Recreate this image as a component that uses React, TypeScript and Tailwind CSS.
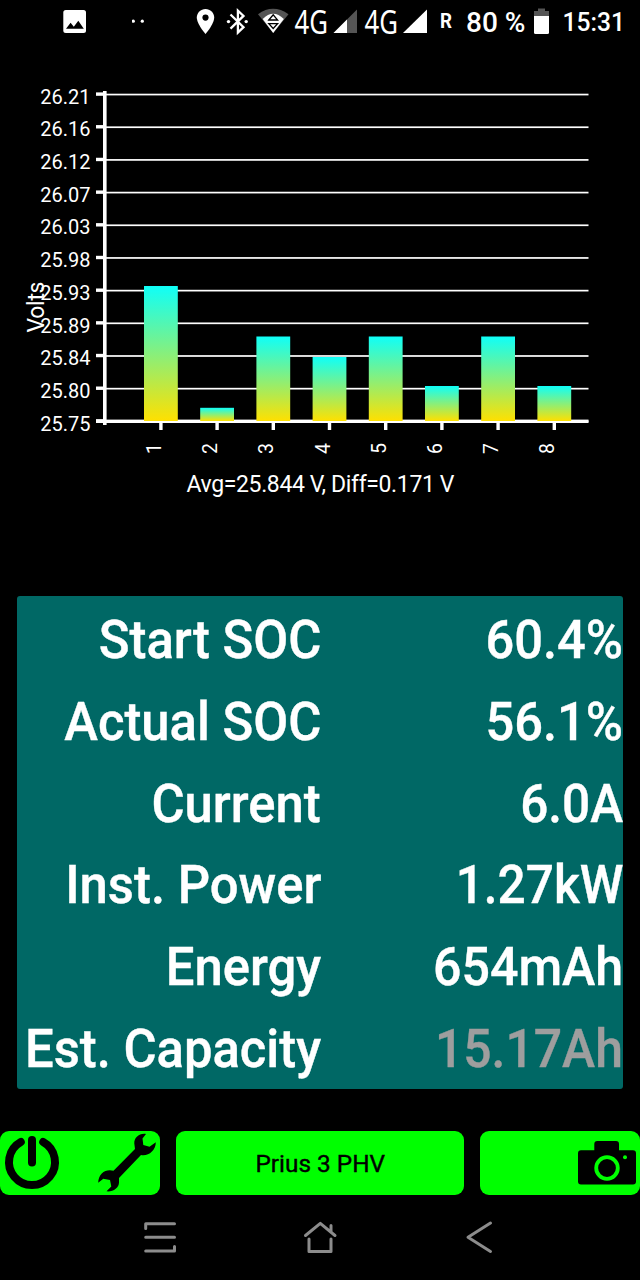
const LABELS = ["26.21", "26.16", "26.12", "26.07", "26.03", "25.98", "25.93", "25.89", "25.84", "25.80", "25.75"];
const TOPS = [286, 407.8, 336.5, 357, 336.5, 386, 336.5, 386];

const ROWS = [
  { label: "Start SOC", value: "60.4%", fit: "scale-x-[0.955]" },
  { label: "Actual SOC", value: "56.1%", fit: "scale-x-[0.955]" },
  { label: "Current", value: "6.0A", fit: "scale-x-[0.935]" },
  { label: "Inst. Power", value: "1.27kW", fit: "scale-x-[0.935]" },
  { label: "Energy", value: "654mAh", fit: "scale-x-[0.945]" },
  { label: "Est. Capacity", value: "15.17Ah", fit: "scale-x-[0.94]", dim: true },
];

function Network() {
  return (
    <svg width="34" height="44" className="shrink-0 overflow-visible" fill="#fff">
      <text x="0.5" y="33.500" fontSize="32" textLength="33.500" lengthAdjust="spacingAndGlyphs" className="font-['Noto_Sans',sans-serif] font-normal">4G</text>
    </svg>
  );
}

function StatusBar() {
  return (
    <header className="flex h-11 items-start pl-[63px] font-medium">
      <svg width="24" height="44" className="mr-[45px] shrink-0">
        <rect x="0.3" y="10" width="22.700" height="23" rx="2.500" fill="#fff" />
        <path d="M3 28.800l4.600-6 3.200 3.900 4.500-5.900 5.500 8z" fill="#000" />
      </svg>
      <svg width="16" height="44" className="mr-[48px] shrink-0" fill="#fff">
        <circle cx="1.300" cy="21.200" r="1.600" />
        <circle cx="10.300" cy="21.200" r="1.600" />
      </svg>
      <svg width="19" height="44" className="mr-[11px] shrink-0">
        <path d="M9.500 9C4.700 9 .8 12.800.8 17.500.8 24 9.500 34 9.500 34s8.700-10 8.700-16.500C18.200 12.800 14.300 9 9.500 9z" fill="#fff" />
        <circle cx="9.500" cy="17.600" r="3.100" fill="#000" />
      </svg>
      <svg width="24" height="44" className="mr-[8px] shrink-0" fill="none" stroke="#fff" strokeWidth="2.300">
        <path d="M4.500 14.500l13 12.700-5.600 5.300V10.700l5.600 5.200-13 12.700" />
        <circle cx="2.500" cy="21.600" r="1.700" fill="#fff" stroke="none" />
        <circle cx="20.200" cy="21.600" r="1.700" fill="#fff" stroke="none" />
      </svg>
      <svg width="32" height="44" className="mr-[4px] shrink-0">
        <path d="M0 14.200Q15 3.500 30.500 14.200L15.200 33z" fill="#555" />
        <path d="M4.700 19Q15.200 8.500 25.800 19L15.200 33z" fill="#fff" />
        <path d="M10.800 20l4.400-5.200 4.400 5.200zM10.800 23.700h8.800l-4.400 4.800z" fill="none" stroke="#000" strokeWidth="1.300" />
      </svg>
      <Network />
      <svg width="26" height="44" className="ml-[5px] mr-[5px] shrink-0">
        <path d="M.5 33L24 9.500V33z" fill="#555" />
        <path d="M.5 33L14 19.500V33z" fill="#fff" />
      </svg>
      <Network />
      <svg width="25" height="44" className="ml-[5px] mr-[12px] shrink-0">
        <path d="M0 33L24 9.500V33z" fill="#fff" />
      </svg>
      <svg width="14" height="44" className="mr-[12px] shrink-0" fill="#fff">
        <text x="0" y="28" fontSize="20" fontWeight="700" textLength="12" lengthAdjust="spacingAndGlyphs">R</text>
      </svg>
      <svg width="62" height="44" className="mr-[6px] shrink-0" fill="#fff">
        <text x="0" y="31.500" fontSize="27" textLength="59.500" lengthAdjust="spacingAndGlyphs">80 %</text>
      </svg>
      <svg width="16" height="44" className="mr-[12px] shrink-0">
        <path d="M4 8.500h7V11h4v5.500H0V11h4z" fill="#555" />
        <path d="M0 16h15v16.500q0 1.500-1.500 1.500h-12Q0 34 0 32.500z" fill="#fff" />
      </svg>
      <svg width="64" height="44" className="shrink-0" fill="#fff">
        <text x="0.500" y="31" fontSize="25.500" textLength="62.500" lengthAdjust="spacingAndGlyphs">15:31</text>
      </svg>
    </header>
  );
}

function Chart() {
  return (
    <svg width="640" height="552" viewBox="0 44 640 552" className="block shrink-0" fill="#fff">
      <defs>
        <linearGradient id="bar" x1="0" y1="0" x2="0" y2="1">
          <stop offset="0" stopColor="#0ffff8" />
          <stop offset="1" stopColor="#ffe000" />
        </linearGradient>
      </defs>
      {LABELS.map((t, i) => (
        <g key={t}>
          <rect x="106" y={93.7 + i * 32.68} width="482.500" height="1.700" />
          <rect x="96" y={92.4 + i * 32.68} width="8" height="3.400" />
          <text x="90.500" y={103.6 + i * 32.7} fontSize="20" textAnchor="end">{t}</text>
        </g>
      ))}
      <rect x="103" y="91" width="3.600" height="334" />
      <rect x="96" y="419.600" width="492.500" height="3.400" />
      {TOPS.map((y, i) => {
        const c = 161 + i * 56.2;
        return (
          <g key={i}>
            <rect x={c - 17} y={y} width="33.800" height={421 - y} fill="url(#bar)" />
            <rect x={c - 1.8} y="422" width="3.400" height="8" />
            <text transform={`translate(${c} 448.600) rotate(-90)`} fontSize="19.500" textAnchor="middle">{i + 1}</text>
          </g>
        );
      })}
      <text transform="translate(43.500 332.500) rotate(-90)" fontSize="23" textLength="51">Volts</text>
      <text x="186.500" y="492.400" fontSize="23" textLength="268">Avg=25.844 V, Diff=0.171 V</text>
    </svg>
  );
}

export default function App() {
  return (
    <main className="flex h-[1280px] w-[640px] flex-col overflow-hidden bg-black font-[Roboto,sans-serif] text-white">
      <StatusBar />
      <Chart />
      <section className="mx-[17px] flex h-[493px] shrink-0 flex-col rounded-[3px] bg-[#006865] pt-[4px] text-[53px] font-medium leading-[81.8px] [-webkit-text-stroke:0.4px_currentColor]">
        {ROWS.map((r) => (
          <div key={r.label} className="flex h-[81.8px] shrink-0 justify-between whitespace-nowrap">
            <span className="flex w-[304px] justify-end">
              <span className="origin-right scale-x-[0.958]">{r.label}</span>
            </span>
            <span className={r.dim ? "text-[#9e9e9e]" : "text-white"}>
              <span className={`inline-block origin-right ${r.fit}`}>{r.value}</span>
            </span>
          </div>
        ))}
      </section>
      <div className="mt-[42px] flex h-16 shrink-0 gap-4 text-black">
        <button className="flex w-40 justify-between rounded-[9px] bg-[#00ff00]">
          <svg width="64" height="64" fill="none" stroke="#000" strokeLinecap="round" strokeWidth="8">
            <path d="M32 9v22.500" />
            <path d="M20.800 11A23 23 0 1 0 43.200 11" />
          </svg>
          <svg width="64" height="64" fill="#000">
            <path d="M50 3C43 2 38 7 38.300 12.500L39 18 17.500 39.700C10 37.500 2.500 42 2.200 51.700L7.300 47.700 14 49 15.300 55.500 10.500 60.300C17 61 23 57 23 51.500V47L45 24C52 25.500 59.800 20 59.800 11.300L53.500 15.700 47.300 14 46.500 7.500z" />
          </svg>
        </button>
        <button className="w-72 rounded-[9px] bg-[#00ff00] font-normal">
          <svg width="288" height="64">
            <text x="79.500" y="41" fontSize="24" textLength="129.500" lengthAdjust="spacingAndGlyphs" stroke="#000" strokeWidth="0.400">Prius 3 PHV</text>
          </svg>
        </button>
        <button className="flex w-40 justify-end rounded-[9px] bg-[#00ff00]">
          <svg width="64" height="64">
            <path d="M5 19.300h13.300V13q0-3 3-3H40q3 0 3 3v6.300h14q3 0 3 3V50.500q0 3-3 3H5q-3 0-3-3V22.300q0-3 3-3z" fill="#000" />
            <circle cx="31" cy="37" r="10.800" fill="none" stroke="#00ff00" strokeWidth="3.800" />
            <circle cx="49" cy="26.200" r="2" fill="#00ff00" />
          </svg>
        </button>
      </div>
      <nav className="flex h-[85px] shrink-0 items-center justify-between px-[142px]">
        <svg width="36" height="40" fill="none" stroke="#8c8c8c" strokeWidth="3" strokeLinecap="round" strokeLinejoin="round">
          <path d="M3.700 10.500V5.700H32.500M3.700 19.300H32.500M3.700 33H32.500V28.500" />
        </svg>
        <svg width="36" height="40" fill="none" stroke="#8c8c8c" strokeWidth="3" strokeLinecap="round" strokeLinejoin="round">
          <path d="M3.500 17.500L18.300 5.300 33 17.500M29 13.500V7.500M7 21V33.500H29V21" />
        </svg>
        <svg width="36" height="40" fill="none" stroke="#8c8c8c" strokeWidth="3" strokeLinecap="round" strokeLinejoin="round">
          <path d="M28.500 5L6 19.300 28.500 33.500" />
        </svg>
      </nav>
    </main>
  );
}
